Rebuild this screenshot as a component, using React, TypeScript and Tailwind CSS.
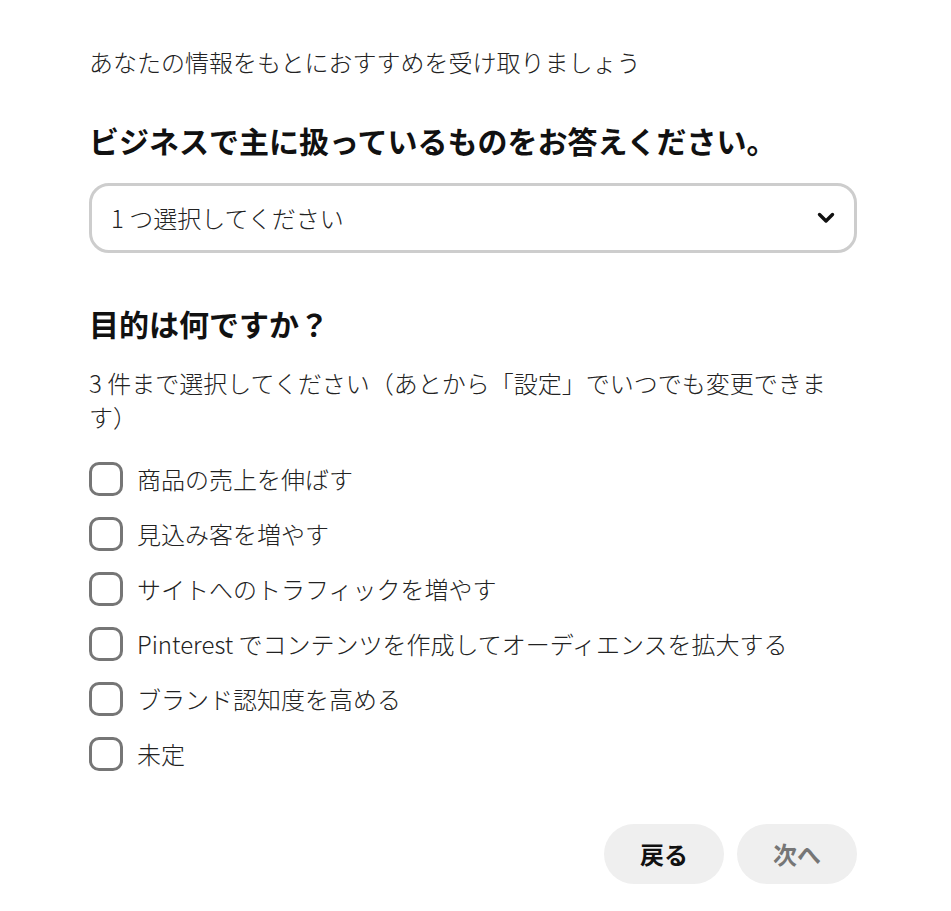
import { useState } from "react";

const goals = [
  "商品の売上を伸ばす",
  "見込み客を増やす",
  "サイトへのトラフィックを増やす",
  "Pinterest でコンテンツを作成してオーディエンスを拡大する",
  "ブランド認知度を高める",
  "未定",
];

export default function App() {
  const [checked, setChecked] = useState<string[]>([]);

  const toggle = (g: string) =>
    setChecked((prev) =>
      prev.includes(g) ? prev.filter((x) => x !== g) : prev.length < 3 ? [...prev, g] : prev
    );

  return (
    <div
      className="min-h-screen bg-white text-[#111111]"
      style={{ fontFamily: '"Noto Sans CJK JP", "Noto Sans", sans-serif' }}
    >
      <div className="w-[857px] pl-[89px] pt-[44px] pb-[27px]">
        {/* Intro */}
        <p className="text-[24px] leading-[36px] font-light text-[#222222]">
          あなたの情報をもとにおすすめを受け取りましょう
        </p>

        <h2 className="mt-[40px] text-[30px] leading-[40px] font-bold">
          ビジネスで主に扱っているものをお答えください。
        </h2>

        {/* Select */}
        <button className="mt-[23px] w-full h-[70px] flex items-center justify-between pl-[19px] pr-[19px] border-[3px] border-[#cdcdcd] rounded-[20px] bg-white">
          <span className="text-[24px] font-light text-[#222222]">1 つ選択してください</span>
          <svg width="18" height="12" viewBox="0 0 18 12" fill="none">
            <path d="M2.5 2.5 L9 9 L15.5 2.5" stroke="#111111" strokeWidth="3.4" strokeLinecap="round" strokeLinejoin="round" />
          </svg>
        </button>

        <h2 className="mt-[50px] text-[30px] leading-[40px] font-bold">目的は何ですか？</h2>

        <p className="mt-[23px] text-[24px] leading-[34px] font-light text-[#222222]">
          3 件まで選択してください（あとから「設定」でいつでも変更できます）
        </p>

        {/* Checkboxes */}
        <div className="mt-[17px] flex flex-col">
          {goals.map((g) => (
            <label key={g} className="h-[55px] flex items-center gap-[14px] cursor-pointer" onClick={() => toggle(g)}>
              <span
                className={`w-[34px] h-[34px] shrink-0 rounded-[10px] border-[3px] ${
                  checked.includes(g) ? "bg-[#111111] border-[#111111]" : "border-[#767676]"
                }`}
              />
              <span className="text-[24px] font-light text-[#222222]">{g}</span>
            </label>
          ))}
        </div>

        {/* Footer buttons */}
        <div className="mt-[43px] flex justify-end gap-[13px]">
          <button className="w-[120px] h-[60px] rounded-full bg-[#efefef] text-[24px] font-bold text-[#111111]">
            戻る
          </button>
          <button className="w-[120px] h-[60px] rounded-full bg-[#efefef] text-[24px] font-bold text-[#767676]">
            次へ
          </button>
        </div>
      </div>
    </div>
  );
}
